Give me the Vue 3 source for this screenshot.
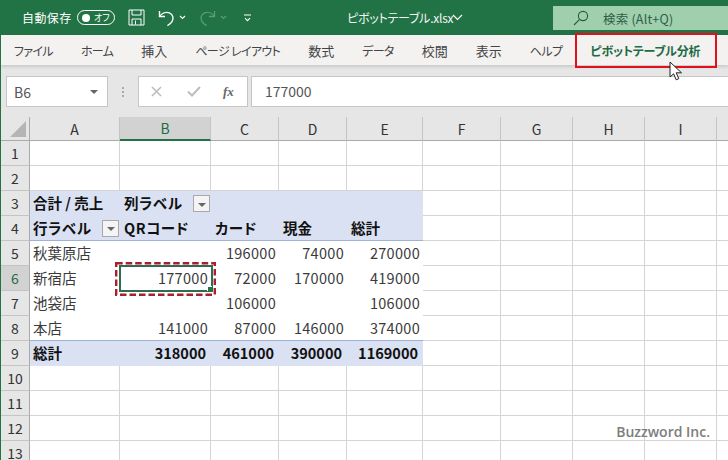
<template>
  <div class="app">
    <!-- Title bar -->
    <header class="titlebar">
      <span class="autosave">自動保存</span>
      <span class="toggle"><i class="knob" /><span class="toggle-text">オフ</span></span>
      <svg class="ico save" width="17" height="17" viewBox="0 0 17 17" fill="none" stroke="#fff" stroke-width="1">
        <path d="M1 1h15v15H1z" />
        <path d="M4 1v5h9V1M4 16v-6h9v6M7.5 11.5v4" />
      </svg>
      <svg class="ico undo" width="17" height="18" viewBox="0 0 17 18" fill="none" stroke="#fff" stroke-width="1.4">
        <path d="M1.5 2v5.5H7" />
        <path d="M1.8 7.3C4 3.8 8 2.6 11.4 3.8c3.6 1.4 4.6 5.8 2.6 8.8-1 1.6-2.6 3-4.6 4" />
      </svg>
      <svg class="ico caret1" width="7" height="5" viewBox="0 0 7 5" fill="none" stroke="#fff" stroke-width="1.2">
        <path d="M1 1l2.5 2.5L6 1" />
      </svg>
      <svg class="ico redo" width="17" height="18" viewBox="0 0 17 18" fill="none" stroke="#5f9a7b" stroke-width="1.3">
        <path d="M15.5 2v5.5H10" />
        <path d="M15.2 7.3C13 3.8 9 2.6 5.6 3.8 2 5.2 1 9.6 3 12.6c1 1.6 2.6 3 4.6 4" />
      </svg>
      <svg class="ico caret2" width="7" height="5" viewBox="0 0 7 5" fill="none" stroke="#5f9a7b" stroke-width="1.2">
        <path d="M1 1l2.5 2.5L6 1" />
      </svg>
      <svg class="ico qat" width="7" height="8" viewBox="0 0 7 8" fill="none" stroke="#fff" stroke-width="1.2">
        <path d="M0 1h7M1 4.2l2.5 2.5L6 4.2" />
      </svg>
      <span class="filename">ピボットテーブル.xlsx</span>
      <svg class="ico chevron" width="11" height="7" viewBox="0 0 11 7" fill="none" stroke="#fff" stroke-width="1.2">
        <path d="M1 1l4.5 4.5L10 1" />
      </svg>
      <div class="search">
        <svg width="16" height="16" viewBox="0 0 16 16" fill="none" stroke="#1f5c3c" stroke-width="1.1">
          <circle cx="10" cy="6" r="4.6" />
          <path d="M6.6 9.4L1 15" />
        </svg>
        <span>検索 (Alt+Q)</span>
      </div>
    </header>

    <!-- Ribbon tabs -->
    <nav class="tabs">
      <span v-for="tab in tabs" :key="tab.label" class="tab" :class="tab.kind">{{ tab.label }}</span>
      <span class="tab tab-active">ピボットテーブル分析</span>
      <span class="tab kana">デザイン</span>
      <span class="red-box" />
      <svg class="cursor" width="14" height="20" viewBox="0 0 14 20">
        <path d="M1 1v15l3.6-3.2 2.6 6 2.6-1.1-2.6-5.9H12.5z" fill="#fff" stroke="#222" stroke-width="1" />
      </svg>
    </nav>

    <!-- Formula bar -->
    <section class="formula-zone">
      <div class="namebox">
        <span>B6</span>
        <i class="name-caret" />
      </div>
      <div class="dots"><i /><i /><i /></div>
      <div class="fx-buttons">
        <svg width="11" height="11" viewBox="0 0 11 11" stroke="#bdbdbd" stroke-width="1.6" fill="none">
          <path d="M1 1l9 9M10 1l-9 9" />
        </svg>
        <svg width="14" height="11" viewBox="0 0 14 11" stroke="#bdbdbd" stroke-width="2" fill="none">
          <path d="M1 5.5l4 4L13 1" />
        </svg>
        <span class="fx">fx</span>
      </div>
      <div class="formula-input">177000</div>
    </section>

    <!-- Sheet -->
    <main class="sheet">
      <div class="corner"><i /></div>
      <div
        v-for="col in columns"
        :key="col"
        class="col-head"
        :class="{ selected: col === 'B' }"
      >
        {{ col }}
      </div>

      <template v-for="row in rows" :key="row.no">
        <div class="row-head" :class="{ selected: row.no === 6 }">{{ row.no }}</div>
        <div
          v-for="(cell, i) in row.cells"
          :key="i"
          class="cell"
          :class="[row.kind, { num: cell.num, wide: cell.wide, outside: i > 4, first: i === 0 }]"
        >
          <span>{{ cell.text }}</span>
          <button v-if="cell.filter" class="filter"><i /></button>
          <template v-if="row.no === 6 && i === 1">
            <span class="active-cell"><i /></span>
            <svg class="dashed" width="101" height="34" viewBox="0 0 101 34" fill="none">
              <rect x="1.2" y="1.2" width="98.6" height="31.6" stroke="#a8202c" stroke-width="2.4" stroke-dasharray="6.5 3" />
            </svg>
          </template>
        </div>
      </template>
      <div class="watermark">Buzzword Inc.</div>
    </main>
  </div>
</template>

<script setup>
const tabs = [
  { label: 'ファイル', kind: 'kana' },
  { label: 'ホーム', kind: 'kana' },
  { label: '挿入', kind: 'kanji' },
  { label: 'ページ レイアウト', kind: 'kana' },
  { label: '数式', kind: 'kanji' },
  { label: 'データ', kind: 'kana' },
  { label: '校閲', kind: 'kanji' },
  { label: '表示', kind: 'kanji' },
  { label: 'ヘルプ', kind: 'kana' }
]
// J列は見出しが画面外に切れるので空にしておく
const columns = ['A', 'B', 'C', 'D', 'E', 'F', 'G', 'H', 'I', '']

const table = {
  3: ['合計 / 売上', { text: '列ラベル', filter: true, wide: true }, '', '', ''],
  4: [
    { text: '行ラベル', filter: true, wide: true },
    { text: 'QRコード', wide: true },
    { text: 'カード', wide: true },
    '現金',
    '総計'
  ],
  5: ['秋葉原店', '', 196000, 74000, 270000],
  6: ['新宿店', 177000, 72000, 170000, 419000],
  7: ['池袋店', '', 106000, '', 106000],
  8: ['本店', 141000, 87000, 146000, 374000],
  9: ['総計', 318000, 461000, 390000, 1169000]
}

const kindOf = (no) => {
  if (no === 3 || no === 4) return 'head-row' + (no === 4 ? ' head-last' : '')
  if (no === 9) return 'total-row'
  if (no >= 5 && no <= 8) return 'body-row' + (no === 8 ? ' body-last' : '')
  return 'plain-row'
}

// 行データを組み立てる
const rows = Array.from({ length: 13 }, (_, idx) => {
  const no = idx + 1
  const values = table[no] || ['', '', '', '', '']
  const cells = values.map((v) => {
    if (typeof v === 'number') return { text: String(v), num: true }
    if (typeof v === 'object') return v
    return { text: v }
  })
  for (let i = 0; i < 5; i++) cells.push({ text: '' })
  return { no, kind: kindOf(no), cells }
})
</script>

<style scoped>
.app {
  width: 728px;
  height: 460px;
  overflow: hidden;
  display: flex;
  flex-direction: column;
  box-sizing: border-box;
  border-left: 1px solid #217346;
  background: #fff;
  font-family: "Noto Sans CJK JP", "Liberation Sans", sans-serif;
  font-feature-settings: "palt";
  color: #222;
}

/* Title bar */
.titlebar {
  height: 35px;
  flex: none;
  margin-left: -1px;
  display: flex;
  align-items: center;
  background: #217346;
  color: #fff;
  font-size: 12px;
}
.autosave {
  margin-left: 22px;
  width: 48px;
  letter-spacing: 0.4px;
  white-space: nowrap;
}
.toggle {
  margin-left: 7px;
  width: 38px;
  height: 15px;
  box-sizing: border-box;
  border: 1px solid #fff;
  border-radius: 8px;
  display: flex;
  align-items: center;
  padding-left: 4px;
  gap: 4px;
}
.knob {
  width: 8px;
  height: 8px;
  border-radius: 50%;
  background: #fff;
}
.toggle-text {
  font-size: 9px;
  line-height: 1;
  white-space: nowrap;
}
.ico {
  flex: none;
}
.save {
  margin-left: 13px;
}
.undo {
  margin-left: 13px;
}
.caret1 {
  margin-left: 4px;
}
.redo {
  margin-left: 13px;
}
.caret2 {
  margin-left: 4px;
}
.qat {
  margin-left: 17px;
}
.filename {
  margin-left: 96px;
  width: 100px;
  white-space: nowrap;
  letter-spacing: -0.25px;
  color: #f2f6f4;
}
.chevron {
  margin-left: 5px;
}
.search {
  margin-left: 90px;
  align-self: flex-start;
  margin-top: 6px;
  flex: 1;
  height: 24px;
  display: flex;
  align-items: center;
  gap: 14px;
  padding-left: 20px;
  background: #a0cfae;
  color: #2c5f45;
  font-size: 12.5px;
  letter-spacing: 0.2px;
}

/* Ribbon tabs */
.tabs {
  position: relative;
  height: 30px;
  flex: none;
  display: flex;
  align-items: center;
  padding-left: 13px;
  gap: 28px;
  background: #f3f2f1;
  font-size: 12px;
  color: #444;
  white-space: nowrap;
  box-shadow: 0 2px 3px rgba(0, 0, 0, 0.12);
  z-index: 1;
}
.tab.kana {
  letter-spacing: -0.65px;
}
.tab.kanji {
  font-size: 13px;
}
.tab-active {
  font-weight: 700;
  color: #1e6b45;
  letter-spacing: -0.2px;
}
.red-box {
  position: absolute;
  left: 574px;
  top: -2px;
  width: 142px;
  height: 35px;
  box-sizing: border-box;
  border: 2px solid #e0101c;
}
.cursor {
  position: absolute;
  left: 668px;
  top: 26px;
}

/* Formula bar */
.formula-zone {
  height: 52px;
  flex: none;
  box-sizing: border-box;
  padding: 11px 0 10px 5px;
  display: flex;
  background: #e6e6e6;
}
.namebox {
  width: 102px;
  box-sizing: border-box;
  border: 1px solid #c6c6c6;
  background: #fff;
  display: flex;
  align-items: center;
  justify-content: space-between;
  padding: 0 9px 0 7px;
  font-size: 14px;
  color: #555;
}
.name-caret {
  border-left: 4px solid transparent;
  border-right: 4px solid transparent;
  border-top: 4px solid #666;
}
.dots {
  width: 30px;
  display: flex;
  flex-direction: column;
  align-items: center;
  justify-content: center;
  gap: 2px;
}
.dots i {
  width: 2px;
  height: 2px;
  background: #aaa;
}
.fx-buttons {
  width: 110px;
  box-sizing: border-box;
  border: 1px solid #c6c6c6;
  background: #fff;
  display: flex;
  align-items: center;
  padding-left: 12px;
  gap: 25px;
}
.fx {
  margin-left: -3px;
  font-family: "Liberation Serif", serif;
  font-style: italic;
  font-weight: 700;
  font-size: 13px;
  color: #666;
}
.formula-input {
  flex: 1;
  margin-left: 3px;
  box-sizing: border-box;
  border: 1px solid #c6c6c6;
  border-right: 0;
  background: #fff;
  display: flex;
  align-items: center;
  padding: 0 0 2px 13px;
  font-size: 14px;
  color: #555;
}

/* Sheet */
.sheet {
  position: relative;
  flex: 1;
  display: grid;
  grid-template-columns: 29px 90px 91px 68px 68px 76px 78px 72px 72px 72px 60px;
  grid-auto-rows: 25px;
  grid-template-rows: 24px;
  align-content: start;
  overflow: hidden;
  font-size: 14.5px;
}
.corner {
  background: #e6e6e6;
  border-right: 1px solid #aaa;
  border-bottom: 1px solid #aaa;
  position: relative;
}
.corner i {
  position: absolute;
  right: 3px;
  bottom: 3px;
  border-left: 16px solid transparent;
  border-bottom: 16px solid #b5b5b5;
}
.col-head {
  background: #e6e6e6;
  border-right: 1px solid #c4c4c4;
  border-bottom: 1px solid #aaa;
  display: flex;
  align-items: center;
  justify-content: center;
  font-size: 14px;
  color: #333;
}
.col-head.selected {
  background: #d2d2d2;
  color: #1e6b45;
  border-bottom: 2px solid #217346;
}
.row-head {
  background: #e6e6e6;
  border-right: 1px solid #aaa;
  border-bottom: 1px solid #c4c4c4;
  display: flex;
  align-items: center;
  justify-content: center;
  font-size: 14px;
  color: #333;
}
.row-head.selected {
  background: #d2d2d2;
  color: #1e6b45;
}
.cell {
  position: relative;
  box-sizing: border-box;
  display: flex;
  align-items: center;
  padding: 0 3px 2px 4px;
  white-space: nowrap;
  color: #3a3a3a;
  border-right: 1px solid #d4d4d4;
  border-bottom: 1px solid #d4d4d4;
}
.cell.first {
  padding-left: 3px;
}
.cell.num {
  justify-content: flex-end;
  letter-spacing: 0.3px;
}
.cell.wide {
  letter-spacing: 0.6px;
}
.head-row,
.total-row {
  background: #d9e1f2;
  font-weight: 700;
  color: #111;
  border-right: 0;
  border-bottom: 0;
}
.body-row {
  border-right: 0;
  border-bottom: 0;
}
.head-last,
.body-last {
  border-bottom: 1px solid #9db2d4;
}
.total-row.num {
  padding-right: 5px;
  letter-spacing: 0;
}
.outside {
  background: #fff;
  border-right: 1px solid #d4d4d4;
  border-bottom: 1px solid #d4d4d4;
}
.filter {
  margin-left: auto;
  margin-right: -2px;
  margin-top: 2px;
  width: 17px;
  height: 17px;
  padding: 0;
  box-sizing: border-box;
  border: 1px solid #a8a8a8;
  background: #f4f4f4;
  display: flex;
  align-items: center;
  justify-content: center;
}
.filter i {
  border-left: 4px solid transparent;
  border-right: 4px solid transparent;
  border-top: 4px solid #666;
  margin-top: 2px;
}
.active-cell {
  position: absolute;
  left: -1px;
  top: -1px;
  right: -2px;
  bottom: -1px;
  border: 2px solid #2f6b50;
}
.active-cell i {
  position: absolute;
  right: -2px;
  bottom: -2px;
  width: 5px;
  height: 5px;
  background: #217346;
  box-shadow: -1px -1px 0 #fff;
}
.dashed {
  position: absolute;
  left: -5px;
  top: -4px;
}
.watermark {
  position: absolute;
  right: 18px;
  top: 305px;
  font-family: "Open Sans", "Liberation Sans", sans-serif;
  font-size: 14px;
  font-weight: 600;
  color: #7d7d7d;
}
</style>
